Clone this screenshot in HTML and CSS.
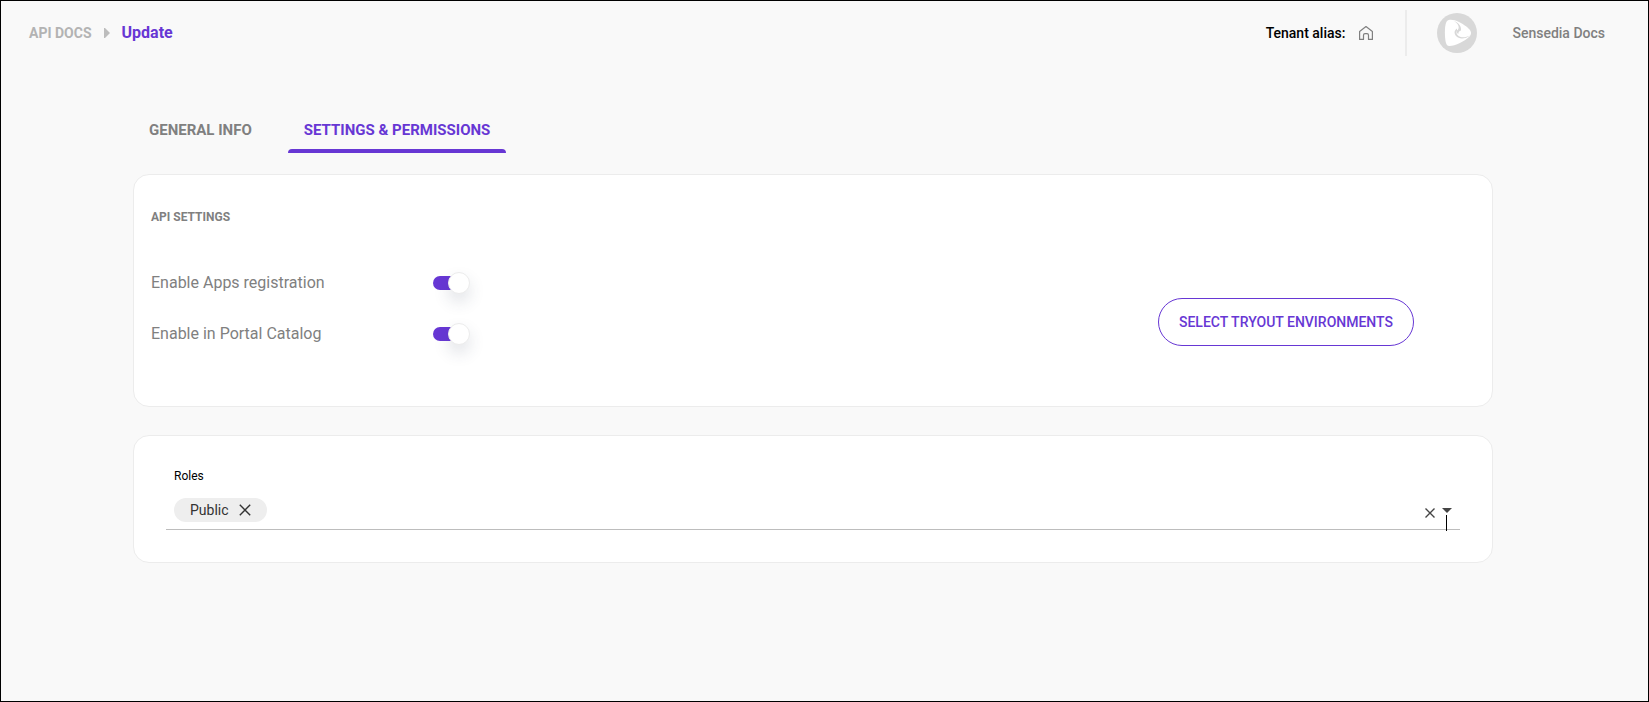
FILE: index.html
```html
<!DOCTYPE html>
<html lang="en">
<head>
    <meta charset="UTF-8">
    <meta name="viewport" content="width=device-width, initial-scale=1.0">
    <title>API Docs - Update</title>
    <link rel="stylesheet" href="styles.css">
</head>
<body>

    <header class="topbar">
        <nav class="breadcrumb" aria-label="Breadcrumb">
            <a href="#" class="crumb">API DOCS</a>
            <svg class="crumb-arrow" width="6" height="10" viewBox="0 0 6 10" aria-hidden="true"><path d="M0 0h1l5 5-5 5H0z" fill="#bdbdbd"/></svg>
            <span class="crumb-current">Update</span>
        </nav>

        <div class="account">
            <div class="tenant">
                <span>Tenant alias:</span>
                <svg width="14" height="14" viewBox="0 0 14 14" fill="none" stroke="#808080" stroke-width="1.200" stroke-linejoin="round" aria-hidden="true"><path d="M.6 5.400 7 .6l6.400 4.800v8H9.500V9.200Q9.500 7.700 8 7.700H6Q4.500 7.700 4.500 9.200v4.200H.6z"/></svg>
            </div>
            <svg class="avatar" width="40" height="40" viewBox="0 0 40 40" aria-hidden="true">
                <circle cx="20" cy="20" r="20" fill="#d8d8d8"/>
                <path d="M10 8C12 6 17 6.500 22 9c5 2.500 10 6 11.500 9 1 2 .5 4-1 5.500C28 28 18 33 12.500 33 10 33 9 31 8.500 28 7.500 21 7.500 11 10 8z" fill="#fff"/>
                <path d="M17 8c5 2 7.500 5.500 7 9.500-2 .5-3 2-2.500 3.500-1.500-.5-2-2-1.500-3.500 3-2 2-6.500-3-9.500z" fill="#d8d8d8"/>
                <path d="M20 17.500c-1 2-.5 4 1.500 5.500 3 2 7.500 1.500 11.500-.5-4.500 3.500-11 4-14 .5-2-2.500-2-5.500 1-7.500z" fill="#d8d8d8"/>
            </svg>
            <span class="username">Sensedia Docs</span>
        </div>
    </header>

    <main class="content">
        <div class="tabs" role="tablist">
            <button type="button" class="tab" role="tab" aria-selected="false">GENERAL INFO</button>
            <button type="button" class="tab active" role="tab" aria-selected="true">SETTINGS &amp; PERMISSIONS</button>
        </div>

        <section class="card settings">
            <h2>API SETTINGS</h2>
            <div class="settings-body">
                <div class="toggles">
                    <div class="toggle-row">
                        <label for="apps">Enable Apps registration</label>
                        <input type="checkbox" class="switch" id="apps" checked>
                    </div>
                    <div class="toggle-row">
                        <label for="catalog">Enable in Portal Catalog</label>
                        <input type="checkbox" class="switch" id="catalog" checked>
                    </div>
                </div>
                <button type="button" class="btn-outline">SELECT TRYOUT ENVIRONMENTS</button>
            </div>
        </section>

        <section class="card roles">
            <h3>Roles</h3>
            <div class="select">
                <div class="chip">
                    <span>Public</span>
                    <button type="button" class="icon-btn" aria-label="Remove Public">
                        <svg width="12" height="12" viewBox="0 0 12 12" stroke="#333" stroke-width="1.400"><path d="M.8.8l10.400 10.400M11.200.8.8 11.200"/></svg>
                    </button>
                </div>
                <div class="select-actions">
                    <button type="button" class="icon-btn" aria-label="Clear all">
                        <svg width="10" height="10" viewBox="0 0 10 10" stroke="#444" stroke-width="1.400"><path d="M.5.5l9 9M9.500.5l-9 9"/></svg>
                    </button>
                    <button type="button" class="icon-btn arrow" aria-label="Open list">
                        <svg width="10" height="5" viewBox="0 0 10 5"><path d="M0 0h10L5 5z" fill="#444"/></svg>
                    </button>
                </div>
            </div>
        </section>
    </main>

</body>
</html>
```

FILE: styles.css
```css
* {
    box-sizing: border-box;
}

body {
    margin: 0;
    min-height: 100vh;
    border: 1px solid #000;
    background-color: #f9f9f9;
    color: #808080;
    font-family: Roboto, sans-serif;
    font-size: 14px;
    line-height: 20px;
}

h2, h3 {
    margin: 0;
}

button {
    font: inherit;
    background: none;
    border: none;
    cursor: pointer;
}

svg {
    display: block;
    flex: none;
}

.topbar {
    display: flex;
    justify-content: space-between;
    align-items: center;
    height: 64px;
    padding: 0 43px 0 28px;
}

.breadcrumb, .account, .tenant {
    display: flex;
    align-items: center;
}

.breadcrumb {
    gap: 12px;
}

.crumb {
    color: #b3b3b3;
    font-weight: 700;
    text-decoration: none;
}

.crumb-current {
    color: #6737d4;
    font-size: 16px;
    font-weight: 700;
}

.tenant {
    gap: 14px;
    height: 46px;
    padding-right: 32px;
    border-right: 2px solid #ececec;
    color: #000;
    font-weight: 500;
}

.avatar {
    margin: 0 35px 0 30px;
}

.username {
    font-weight: 500;
}

.content {
    padding: 44px 155px 32px 132px;
}

.tabs {
    display: flex;
    gap: 20px;
}

.tab {
    height: 44px;
    padding: 2px 16px 0;
    color: #808080;
    font-size: 15px;
    font-weight: 700;
    border-bottom: 4px solid transparent;
}

.tab.active {
    position: relative;
    color: #6737d4;
}

.tab.active::after {
    content: "";
    position: absolute;
    left: 0;
    right: 0;
    bottom: -4px;
    height: 4px;
    background: #6737d4;
    border-radius: 4px 4px 0 0;
}

.card {
    background: #fff;
    border: 1px solid #ececec;
    border-radius: 16px;
}

.settings {
    margin-top: 21px;
    padding: 32px 78px 48px 17px;
}

.settings h2 {
    font-size: 12px;
    font-weight: 700;
}

.settings-body {
    display: flex;
    justify-content: space-between;
    align-items: center;
    margin-top: 31px;
}

.toggles {
    display: grid;
    gap: 2px;
}

.toggle-row {
    display: flex;
    align-items: center;
    height: 49px;
}

.toggle-row label {
    width: 282px;
    font-size: 16px;
}

.switch {
    appearance: none;
    display: flex;
    align-items: center;
    justify-content: flex-end;
    width: 37px;
    height: 14px;
    margin: 0;
    border-radius: 7px;
    background: linear-gradient(to right, #6737d4 27px, transparent 27px);
    cursor: pointer;
}

.switch::before {
    content: "";
    width: 20px;
    height: 20px;
    flex: none;
    border: 1px solid #ececec;
    border-radius: 50%;
    background: #fff;
    box-shadow: 0 8px 16px rgba(50, 60, 90, 0.15);
}

.switch:not(:checked) {
    justify-content: flex-start;
    background: #bdbdbd;
}

.btn-outline {
    height: 48px;
    margin-top: 28px;
    padding: 0 20px;
    border: 1px solid #6737d4;
    border-radius: 24px;
    color: #6737d4;
    font-weight: 500;
}

.roles {
    margin-top: 28px;
    padding: 30px 32px 32px;
}

.roles h3 {
    padding-left: 8px;
    color: #000;
    font-size: 12px;
    font-weight: 400;
}

.select {
    display: flex;
    justify-content: space-between;
    align-items: center;
    height: 44px;
    padding: 4px 8px 0;
    border-bottom: 1px solid #bdbdbd;
}

.chip {
    display: flex;
    align-items: center;
    gap: 10px;
    height: 24px;
    padding: 0 16px;
    border-radius: 12px;
    background: #eee;
    color: #333;
}

.icon-btn {
    padding: 0;
}

.select-actions {
    display: flex;
    gap: 7px;
    padding-top: 6px;
}

.arrow {
    position: relative;
    display: flex;
    align-items: flex-start;
}

/* pointer line hanging from the arrow, crosses the underline */
.arrow::after {
    content: "";
    position: absolute;
    top: 7px;
    left: 4px;
    width: 1px;
    height: 16px;
    background: #000;
}
```
